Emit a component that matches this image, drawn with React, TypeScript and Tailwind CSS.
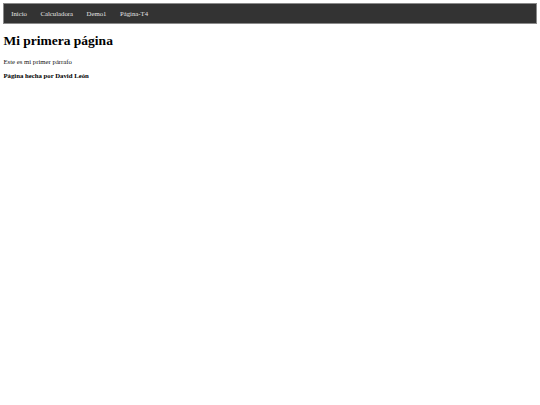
const links = ['Inicio', 'Calculadora', 'Demo1', 'Página-T4']

export default function App() {
  return (
    <div className="min-h-[405px] bg-white p-[3.4px] font-['Liberation_Serif',serif] text-black">
      <nav className="flex h-[21px] items-center border border-[#8a8a8a] bg-[#333333]">
        <ul className="flex items-center">
          {links.map((label) => (
            <li key={label}>
              <a href="#" className="block px-[6.75px] text-[6.75px] leading-[19px] font-normal text-[#e4e4e4]">
                {label}
              </a>
            </li>
          ))}
        </ul>
      </nav>
      <h1 className="my-[9px] text-[13.5px] font-bold leading-[1.15]">Mi primera página</h1>
      <p className="my-[6.75px] text-[6.75px] leading-[1.15] text-[#111]">Este es mi primer párrafo</p>
      <p className="my-[6.75px] text-[6.75px] font-bold leading-[1.15]">Página hecha por David León</p>
    </div>
  )
}
